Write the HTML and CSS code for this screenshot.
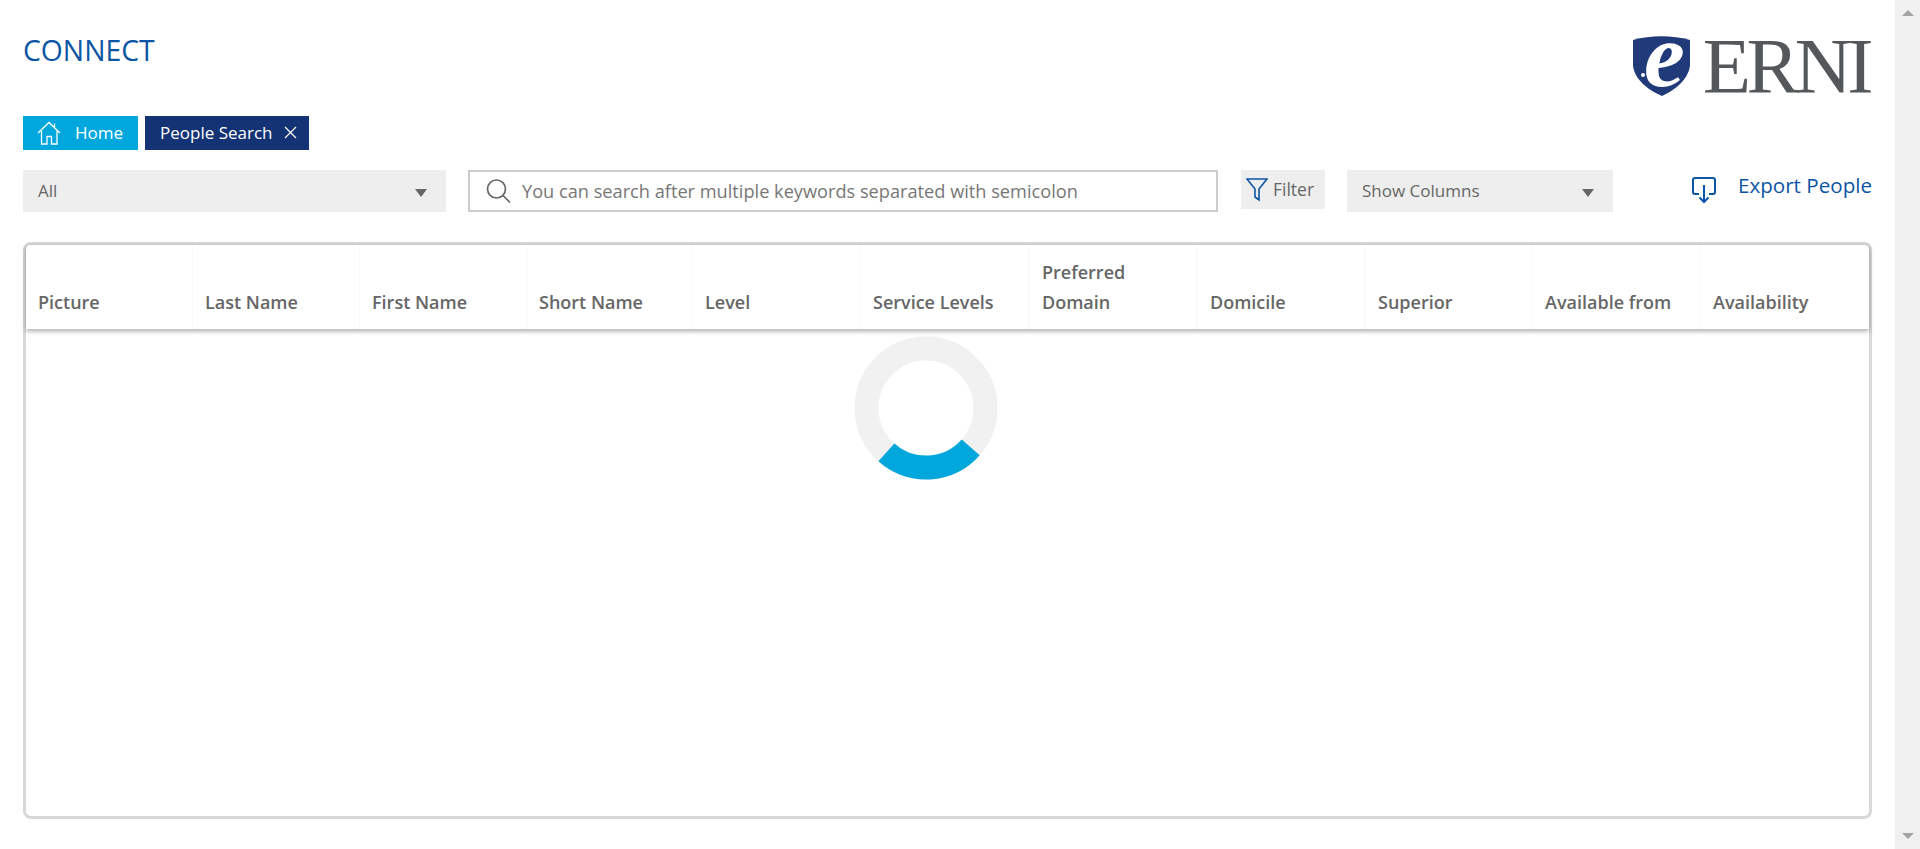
FILE: index.html
```html
<!DOCTYPE html>
<html lang="en">
<head>
<meta charset="UTF-8" />
<title>CONNECT - People Search</title>
<link rel="stylesheet" href="styles.css">
</head>
<body>
<div class="page">
  <main class="content">
    <header class="top">
      <h1 class="app-name">CONNECT</h1>
      <div class="logo">
        <svg class="shield" width="58" height="63" viewBox="0 0 58 63">
          <path d="M0 6 C18 1 39 1 57 6 L57 32 C55 46 42 56 29 62 C15 56 2 46 0 32 Z" fill="#213a7a" />
          <circle cx="10" cy="41" r="2" fill="#fff" />
          <text class="logo-e" x="11" y="52">e</text>
        </svg>
        <span class="logo-name">ERNI</span>
      </div>
    </header>

    <nav class="tabs">
      <a class="tab tab-home" href="#">
        <svg width="24" height="24" viewBox="0 0 24 24" fill="none" stroke="#fff" stroke-width="1.3">
          <path d="M1 12 L12 1.5 L23 12" />
          <path d="M4.5 10 V23 H10 V15.5 H14.5 V23 H20 V10" />
          <path d="M17.5 6 V2.5" />
        </svg>
        Home
      </a>
      <a class="tab tab-active" href="#">
        People Search
        <svg width="13" height="13" viewBox="0 0 13 13" stroke="#fff" stroke-width="1.2">
          <path d="M1 1 L12 12 M12 1 L1 12" />
        </svg>
      </a>
    </nav>

    <div class="toolbar">
      <div class="dropdown dropdown-all">All<span class="caret"></span></div>
      <div class="search">
        <svg width="26" height="26" viewBox="0 0 26 26" fill="none" stroke="#666" stroke-width="1.7">
          <circle cx="11.5" cy="11" r="9" />
          <path d="M18 17.5 L25 24.5" />
        </svg>
        <span>You can search after multiple keywords separated with semicolon</span>
      </div>
      <button class="filter" type="button">
        <svg width="22" height="25" viewBox="0 0 22 25" fill="none" stroke="#0b55a5" stroke-width="1.6">
          <path d="M1 2 H21 L13 12 V23 L9 20 V12 Z" />
        </svg>
        Filter
      </button>
      <div class="dropdown dropdown-columns">Show Columns<span class="caret"></span></div>
      <a class="export" href="#">
        <svg width="24" height="27" viewBox="0 0 24 27" fill="none" stroke="#0b55a5" stroke-width="2">
          <path d="M7 17 H3 Q1 17 1 15 V3 Q1 1 3 1 H21 Q23 1 23 3 V15 Q23 17 21 17 H17" />
          <path d="M12 8 V25 M7.5 20.5 L12 25 L16.5 20.5" />
        </svg>
        <span>Export People</span>
      </a>
    </div>

    <section class="grid-panel">
      <div class="grid-head">
        <div class="col">Picture</div>
        <div class="col">Last Name</div>
        <div class="col">First Name</div>
        <div class="col">Short Name</div>
        <div class="col">Level</div>
        <div class="col">Service Levels</div>
        <div class="col">Preferred<br>Domain</div>
        <div class="col">Domicile</div>
        <div class="col">Superior</div>
        <div class="col">Available from</div>
        <div class="col">Availability</div>
      </div>
      <svg class="spinner" width="144" height="144" viewBox="0 0 144 144" fill="none" stroke-width="24">
        <circle cx="72" cy="72" r="59.5" stroke="#f1f1f1" />
        <path d="M32.4 116.4 A59.5 59.5 0 0 0 116.7 111.3" stroke="#00a7dd" />
      </svg>
    </section>
  </main>

  <aside class="scrollbar">
    <span class="arrow-up"></span>
    <span class="arrow-down"></span>
  </aside>
</div>
</body>
</html>
```

FILE: styles.css
```css
* {
  box-sizing: border-box;
}
html, body {
  margin: 0;
  height: 100%;
  overflow: hidden;
}
body {
  font-family: "Open Sans", "Noto Sans", sans-serif;
  color: #666;
  background: #fff;
}
a {
  text-decoration: none;
}
.page {
  display: flex;
  height: 849px;
}
.content {
  flex: 1;
  padding: 0 23px;
}
.top {
  display: flex;
  justify-content: space-between;
  height: 116px;
}
.app-name {
  margin: 32px 0 0;
  font-size: 28.3px;
  line-height: 37px;
  font-weight: 400;
  color: #0b55a5;
}
.logo {
  display: flex;
  align-items: flex-start;
  gap: 12px;
  padding-top: 34px;
  padding-right: 3px;
}
.shield {
  overflow: visible;
}
.logo-e {
  font-family: "Liberation Serif", serif;
  font-style: italic;
  font-weight: 700;
  font-size: 92px;
  fill: #fff;
}
.logo-name {
  font-family: "Liberation Serif", serif;
  font-size: 79px;
  line-height: 64px;
  letter-spacing: -4.5px;
  color: #54585a;
}
.tabs {
  display: flex;
  gap: 7px;
  height: 34px;
}
.tab {
  display: flex;
  align-items: center;
  padding-bottom: 1px;
  color: #fff;
  font-size: 17px;
}
.tab-home {
  width: 115px;
  padding-left: 14px;
  gap: 14px;
  background: #00a7dd;
}
.tab-active {
  width: 164px;
  padding-left: 15px;
  gap: 12px;
  background: #133374;
}
.toolbar {
  display: flex;
  align-items: flex-start;
  margin-top: 20px;
  height: 42px;
}
.dropdown {
  position: relative;
  height: 42px;
  padding-left: 15px;
  background: #eee;
  font-size: 17px;
  line-height: 42px;
}
.dropdown-all {
  width: 423px;
  margin-right: 22px;
}
.dropdown-columns {
  width: 266px;
}
.caret {
  position: absolute;
  right: 19px;
  top: 19px;
  border: 6px solid transparent;
  border-top: 8px solid #666;
  border-bottom: 0;
}
.search {
  display: flex;
  align-items: center;
  gap: 11px;
  width: 750px;
  height: 42px;
  margin-right: 23px;
  padding-left: 15px;
  padding-bottom: 1px;
  border: 2px solid #ccc;
  font-size: 18.2px;
  color: #777;
}
.filter {
  display: flex;
  align-items: center;
  gap: 5px;
  width: 84px;
  height: 39px;
  margin-right: 22px;
  padding: 0 0 1px 5px;
  border: 0;
  background: #eee;
  font: inherit;
  font-size: 17.5px;
  color: #666;
}
.export {
  display: flex;
  align-items: flex-start;
  gap: 22px;
  margin-left: auto;
  padding-top: 1px;
  color: #0b55a5;
  font-size: 20.6px;
  line-height: 28px;
}
.export svg {
  margin-top: 6px;
}
.grid-panel {
  position: relative;
  height: 577px;
  margin-top: 30px;
  border: 3px solid #d8d8d8;
  border-radius: 8px;
}
.grid-head {
  display: grid;
  grid-template-columns: 167px 167px 167px 166px 168px 169px 168px 168px 167px 168px 1fr;
  height: 84px;
  box-shadow: 0 2px 5px rgba(0, 0, 0, 0.35);
}
.col {
  display: flex;
  align-items: flex-end;
  padding: 0 0 12px 12px;
  border-right: 1px solid #f8f8f8;
  font-size: 18px;
  font-weight: 600;
  line-height: 30px;
  color: #666;
}
.col:last-child {
  border-right: 0;
}
.spinner {
  position: absolute;
  left: 828px;
  top: 91px;
}
.scrollbar {
  display: flex;
  flex-direction: column;
  justify-content: space-between;
  align-items: center;
  width: 25px;
  padding: 10px 0;
  background: #f0f0f0;
}
.arrow-up {
  border: 6px solid transparent;
  border-bottom: 6px solid #a3a3a3;
  border-top: 0;
}
.arrow-down {
  border: 6px solid transparent;
  border-top: 6px solid #a3a3a3;
  border-bottom: 0;
}
```
